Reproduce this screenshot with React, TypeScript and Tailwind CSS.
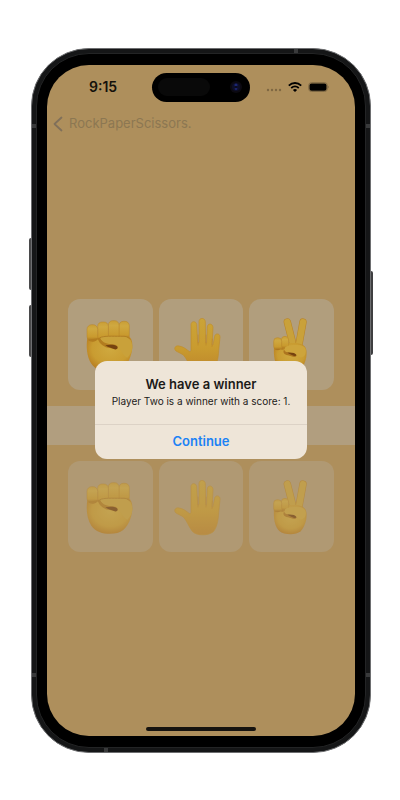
import type { ReactElement } from 'react';

const SKIN = '#c9a13a';
const EDGE = '#b98428';

function Shades({ id }: { id: string }) {
  return (
    <defs>
      <radialGradient id={id + 'r'} cx="0.52" cy="0.4" r="0.62">
        <stop offset="0" stopColor="#cfa93f" />
        <stop offset="0.65" stopColor="#c99c31" />
        <stop offset="1" stopColor="#b67a1f" />
      </radialGradient>
      <linearGradient id={id + 'v'} x1="0" y1="0" x2="0" y2="1">
        <stop offset="0" stopColor="#c99e36" />
        <stop offset="0.25" stopColor="#cfa840" />
        <stop offset="0.75" stopColor="#c99a2e" />
        <stop offset="1" stopColor="#a8701c" />
      </linearGradient>
      <linearGradient id={id + 'p'} gradientUnits="userSpaceOnUse" x1="90" y1="10" x2="90" y2="172">
        <stop offset="0" stopColor="#cba437" />
        <stop offset="0.55" stopColor="#c99b2f" />
        <stop offset="1" stopColor="#bd852b" />
      </linearGradient>
    </defs>
  );
}

function Fist({ id }: { id: string }) {
  return (
    <svg viewBox="0 0 180 180" className="size-[60px]" aria-hidden="true">
      <Shades id={id} />
      <path
        d="M22 68C18 96 20 124 34 146C50 170 86 174 112 168C138 161 154 130 157 98C158 80 154 68 145 62L60 56Z"
        fill={`url(#${id}r)`}
      />
      <g fill={`url(#${id}v)`} stroke={EDGE} strokeWidth="1.5">
        <rect x="117" y="19" width="31" height="55" rx="13" />
        <rect x="85" y="17" width="32" height="58" rx="13" />
        <rect x="53" y="21" width="32" height="58" rx="13" />
        <rect x="21" y="29" width="32" height="49" rx="14" />
      </g>
      <path
        d="M60 68C72 60 96 64 122 63C144 62 157 74 157 98C156 110 150 120 142 128C128 122 122 100 108 90C90 88 62 84 60 68Z"
        fill={SKIN}
      />
      <path d="M24 75C34 82 45 82 54 73C59 88 73 98 90 99C102 102 109 106 113 99C114 92 106 88 94 88C76 86 63 79 60 68" fill="#b27c1f" />
      <path d="M76 91C88 89 102 88 111 94C116 100 109 106 102 102C94 98 86 99 76 91Z" fill="#75420f" />
      <path d="M60 68C72 62 96 64 122 64C137 63 145 65 150 73" fill="none" stroke="#b27f24" strokeWidth="3" />
    </svg>
  );
}

function Palm({ id }: { id: string }) {
  return (
    <svg viewBox="0 0 180 180" className="size-[60px]" aria-hidden="true">
      <Shades id={id} />
      <path
        d="M60 106V29C60 17 76 17 77 29L80 83H84V20C84 7 102 7 103 20L104 84H107L109 36C110 23 126 25 126 38L123 90H126L131 64C133 53 148 55 147 67L143 107C142 130 137 154 126 165C110 177 76 176 65 164C53 150 48 130 36 119L15 108C7 101 13 90 24 93C38 95 46 103 57 111Z"
        fill={`url(#${id}p)`}
        stroke="#c08d2c"
        strokeWidth="2"
        strokeLinejoin="round"
      />
      <path d="M81 60V90M105 60V90M124 72L123 95" stroke="#bd862a" strokeWidth="2" strokeLinecap="round" />
    </svg>
  );
}

function Victory({ id }: { id: string }) {
  return (
    <svg viewBox="0 0 180 180" className="size-[60px]" aria-hidden="true">
      <Shades id={id} />
      <g strokeLinecap="round" fill="none">
        <path d="M76 21L94 92" stroke="#b98428" strokeWidth="22" />
        <path d="M76 21L94 92" stroke={SKIN} strokeWidth="19" />
        <path d="M123 21L110 94" stroke="#b98428" strokeWidth="22" />
        <path d="M123 21L110 94" stroke={SKIN} strokeWidth="19" />
      </g>
      <path
        d="M36 94C34 124 38 148 52 162C66 174 100 176 116 163C130 148 136 122 133 105C130 90 116 84 96 84H60Z"
        fill={`url(#${id}r)`}
      />
      <rect x="58" y="64" width="22" height="38" rx="11" fill={`url(#${id}v)`} stroke={EDGE} strokeWidth="1.5" />
      <rect x="35" y="68" width="24" height="37" rx="11" fill={`url(#${id}v)`} stroke={EDGE} strokeWidth="1.5" />
      <path d="M38 102C48 108 56 104 60 98C67 105 74 110 84 114C92 118 100 118 103 123C99 130 87 123 78 121C66 118 62 112 66 104" fill="#ad761f" />
      <path
        d="M68 100C72 88 98 89 116 91C130 94 135 104 130 118C124 130 112 130 106 121C98 112 76 115 68 108Z"
        fill="#cda43b"
      />
      <path d="M76 113C88 112 100 113 104 121C98 127 90 119 76 113Z" fill="#75420f" />
    </svg>
  );
}

type Hand = { name: string; Icon: (p: { id: string }) => ReactElement };

const HANDS: Hand[] = [
  { name: 'Rock', Icon: Fist },
  { name: 'Paper', Icon: Palm },
  { name: 'Scissors', Icon: Victory },
];

function HandRow({ player, faded }: { player: string; faded: boolean }) {
  return (
    <div className="grid grid-cols-3 gap-[6px] px-[21px]">
      {HANDS.map(({ name, Icon }) => (
        <button
          key={name}
          type="button"
          aria-label={`${player}: ${name}`}
          className={`flex h-[91px] items-center justify-center rounded-xl ${faded ? 'bg-[#b09973]' : 'bg-[#b19e7d]'}`}
        >
          <span className={faded ? 'opacity-65' : 'opacity-100'}>
            <Icon id={player + name} />
          </span>
        </button>
      ))}
    </div>
  );
}

function StatusBar() {
  return (
    <div className="grid h-11 grid-cols-[1fr_auto_1fr] items-center px-[26px] text-[#14110b]">
      <span className="pl-4 text-sm font-semibold">9:15</span>
      <div className="flex h-[29px] w-[98px] items-center justify-between rounded-full bg-black pr-2 pl-[6px]">
        <span className="h-[18px] w-[52px] rounded-full bg-[#090909]" />
        <span className="flex size-3 items-center justify-center rounded-full bg-[#0b0911]">
          <svg viewBox="0 0 12 12" className="size-3" aria-hidden="true">
            <circle cx="6" cy="6" r="4" fill="#0d0e29" />
            <circle cx="6" cy="4" r="1.6" fill="#1b2673" />
            <circle cx="6" cy="7.8" r="1.4" fill="#1b2168" />
            <circle cx="6" cy="6" r="1" fill="#080914" />
          </svg>
        </span>
      </div>
      <div className="flex items-center justify-end gap-[6px]">
        <svg viewBox="0 0 16 10" className="h-[10px] w-4" fill="#7f6843" aria-hidden="true">
          <circle cx="2" cy="8" r="1.2" />
          <circle cx="6" cy="8" r="1.2" />
          <circle cx="10" cy="8" r="1.2" />
          <circle cx="14" cy="8" r="1.2" />
        </svg>
        <svg viewBox="0 0 14 10" className="h-[10px] w-[14px]" fill="none" stroke="#000" aria-hidden="true">
          <path d="M.8 3.6C4.4 .2 9.6 .2 13.2 3.6" strokeWidth="1.9" />
          <path d="M3.2 6C5.5 4 8.5 4 10.8 6" strokeWidth="1.8" />
          <path d="M7 10L4.9 7.9C6.2 6.8 7.8 6.8 9.1 7.9Z" fill="#000" stroke="none" />
        </svg>
        <svg viewBox="0 0 21 10" className="h-[10px] w-[21px]" aria-hidden="true">
          <rect x=".7" y=".7" width="18.6" height="8.8" rx="2.8" fill="none" stroke="#806a45" strokeWidth="1" />
          <rect x="1.5" y="1.5" width="17" height="7.2" rx="2" fill="#000" />
          <path d="M20.2 3.7C21.2 4.2 21.2 6 20.2 6.5Z" fill="#806a45" />
        </svg>
      </div>
    </div>
  );
}

function WinnerAlert() {
  return (
    <div className="absolute inset-0 flex items-center justify-center px-12 pt-[18px]">
      <div
        role="alertdialog"
        aria-labelledby="alert-title"
        aria-describedby="alert-message"
        className="w-full max-w-[212px] overflow-hidden rounded-xl bg-[#eee5d8] text-center"
      >
        <div className="pt-[14px] pb-[15px]">
          <h2 id="alert-title" className="text-[13px] leading-[18px] font-semibold text-[#1c1a18]">
            We have a winner
          </h2>
          <p id="alert-message" className="text-[10px] leading-4 whitespace-nowrap text-[#1c1a18]">
            Player Two is a winner with a score: 1.
          </p>
        </div>
        <button
          type="button"
          className="h-[35px] w-full border-t border-[#dcd2c6] pt-px text-[13px] font-semibold text-[#1c82f5]"
        >
          Continue
        </button>
      </div>
    </div>
  );
}

export default function App() {
  return (
    <div className="flex min-h-screen justify-center bg-white pt-12 pr-[29px] pb-[47px] pl-[31px] font-['Inter','Liberation_Sans',sans-serif]">
      <div className="relative flex w-full max-w-[400px]">
        <span className="absolute top-[190px] -left-[2px] h-[52px] w-1 rounded-sm bg-[#4a4a4b]" />
        <span className="absolute top-[257px] -left-[2px] h-[52px] w-1 rounded-sm bg-[#4a4a4b]" />
        <span className="absolute top-[223px] -right-[2px] h-[84px] w-1 rounded-sm bg-[#3f3f41]" />
        <div className="relative flex w-full rounded-[58px] border border-[#6d6e70] bg-[#151617] p-1">
          <span className="absolute top-[75px] left-0 h-1 w-1 bg-[#393a3b]" />
          <span className="absolute top-[75px] right-0 h-1 w-1 bg-[#393a3b]" />
          <span className="absolute bottom-[75px] left-0 h-1 w-1 bg-[#393a3b]" />
          <span className="absolute right-0 bottom-[75px] h-1 w-1 bg-[#393a3b]" />
          <span className="absolute top-0 right-[72px] h-1 w-1 bg-[#393a3b]" />
          <span className="absolute bottom-0 left-[72px] h-1 w-1 bg-[#393a3b]" />
          <div className="flex w-full rounded-[53px] border border-[#232425] bg-black px-[10px] py-[11px]">
            <div className="relative flex w-full flex-col overflow-hidden rounded-[42px] bg-[#ae8f5c]">
              <StatusBar />
              <nav className="flex h-[30px] items-center px-[6px]">
                <button type="button" className="flex items-center gap-[6px] text-[13px] text-[#8c7752]">
                  <svg viewBox="0 0 10 16" className="h-4 w-[10px]" fill="none" stroke="#80705a" strokeWidth="1.8" strokeLinecap="round" strokeLinejoin="round" aria-hidden="true">
                    <path d="M8.5 1.5L1.5 8L8.5 14.5" />
                  </svg>
                  RockPaperScissors.
                </button>
              </nav>
              <main className="flex flex-1 flex-col justify-center gap-4">
                <HandRow player="One" faded={false} />
                <div className="h-[39px] bg-[#b19e7f]" />
                <HandRow player="Two" faded />
              </main>
              <div className="flex h-6 items-end justify-center pb-[5px]">
                <span className="h-1 w-[110px] rounded-full bg-[#16130f]" />
              </div>
              <WinnerAlert />
            </div>
          </div>
        </div>
      </div>
    </div>
  );
}
